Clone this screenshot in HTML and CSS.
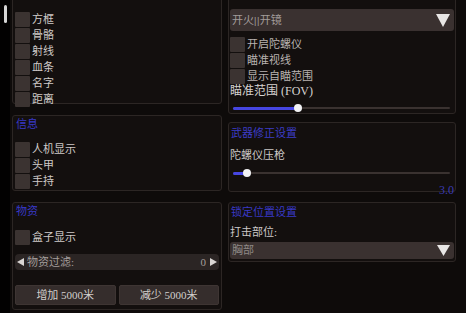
FILE: index.html
```html
<!DOCTYPE html>
<html lang="zh">
<head>
<meta charset="utf-8">
<link rel="stylesheet" href="styles.css">
</head>
<body>
<div class="app">
  <div class="rail"><div class="thumb"></div></div>
  <div class="main">
    <div class="col col-left">
      <section class="panel p-visual">
        <div class="hdr">透视</div>
        <div class="rows r-visual">
          <div class="chk"><span class="box"></span><span>方框</span></div>
          <div class="chk"><span class="box"></span><span>骨骼</span></div>
          <div class="chk"><span class="box"></span><span>射线</span></div>
          <div class="chk"><span class="box"></span><span>血条</span></div>
          <div class="chk"><span class="box"></span><span>名字</span></div>
          <div class="chk"><span class="box"></span><span>距离</span></div>
        </div>
      </section>
      <section class="panel p-info">
        <div class="hdr">信息</div>
        <div class="rows r-info">
          <div class="chk"><span class="box"></span><span>人机显示</span></div>
          <div class="chk"><span class="box"></span><span>头甲</span></div>
          <div class="chk"><span class="box"></span><span>手持</span></div>
        </div>
      </section>
      <section class="panel p-items">
        <div class="hdr">物资</div>
        <div class="rows r-items">
          <div class="chk"><span class="box"></span><span>盒子显示</span></div>
        </div>
        <div class="filter">
          <svg class="arr" width="7" height="8" viewBox="0 0 7 8"><path d="M7 0V8L0 4Z" fill="#d9d5d3"/></svg>
          <span class="f-label">物资过滤:</span>
          <span class="f-val">0</span>
          <svg class="arr" width="7" height="8" viewBox="0 0 7 8"><path d="M0 0V8L7 4Z" fill="#d9d5d3"/></svg>
        </div>
        <div class="btns">
          <div class="btn">增加 5000米</div>
          <div class="btn">减少 5000米</div>
        </div>
      </section>
    </div>
    <div class="col col-right">
      <section class="panel p-aim">
        <div class="combo c-big">
          <span>开火<span class="bars">||</span>开镜</span>
          <svg width="14" height="14" viewBox="0 0 14 14"><path d="M0 1H14L7 14Z" fill="#e8e6e5"/></svg>
        </div>
        <div class="rows r-aim">
          <div class="chk dim"><span class="box"></span><span>开启陀螺仪</span></div>
          <div class="chk dim"><span class="box"></span><span>瞄准视线</span></div>
          <div class="chk dim"><span class="box"></span><span>显示自瞄范围</span></div>
        </div>
        <div class="label l-fov">瞄准范围 (FOV)</div>
        <div class="slider s-fov">
          <div class="track"><div class="fill" style="width:65px"><span class="knob"></span></div></div>
        </div>
      </section>
      <section class="panel p-weapon">
        <div class="hdr">武器修正设置</div>
        <div class="label l-gyro">陀螺仪压枪</div>
        <div class="slider s-gyro">
          <div class="track"><div class="fill" style="width:14px"><span class="knob"></span></div></div>
        </div>
        <div class="val">3.0</div>
      </section>
      <section class="panel p-lock">
        <div class="hdr">锁定位置设置</div>
        <div class="label l-part">打击部位:</div>
        <div class="combo c-small">
          <span>胸部</span>
          <svg width="13" height="11" viewBox="0 0 13 11"><path d="M0 0H13L6.5 11Z" fill="#e8e6e5"/></svg>
        </div>
      </section>
    </div>
  </div>
</div>
</body>
</html>
```
FILE: styles.css
```css
* { box-sizing: border-box; margin: 0; padding: 0; }
html, body { width: 466px; height: 313px; overflow: hidden; background: #0e0b0a; }
body { font: 11px/13px "Liberation Serif", "Noto Sans CJK SC", serif; color: #cfcac8; }

.app { display: flex; height: 313px; }
.rail { width: 10px; flex: none; background: #020101; padding: 5px 0 0 4px; }
.thumb { width: 3px; height: 18px; background: #d4d4d4; border-radius: 2px; }

.main { flex: 1; display: flex; padding-left: 2px; gap: 6px; }
.col { display: flex; flex-direction: column; flex: none; }
.col-left { width: 210px; margin-top: -14px; }
.col-right { width: 228px; margin-top: -6px; }

.panel { border: 1px solid #2c2624; border-radius: 3px; background: #130f0e; padding: 2px 2px 0; flex: none; }
.hdr { color: #3838c6; height: 13px; padding-left: 1px; white-space: nowrap; }

.rows { display: flex; flex-direction: column; gap: 1px; }
.chk { display: flex; align-items: center; height: 15px; white-space: nowrap; }
.chk.dim { color: #b9b3b1; }
.box { width: 15px; height: 15px; flex: none; background: #3b3331; border-radius: 1px; margin-right: 2px; }

.p-visual { height: 118px; }
.r-visual { margin-top: 10px; }
.p-info { height: 76px; margin-top: 11px; }
.r-info { margin-top: 11px; }
.p-items { height: 108px; margin-top: 11px; }
.r-items { margin-top: 12px; }

.filter { margin-top: 9px; height: 16px; background: #2b2524; border-radius: 4px; display: flex; align-items: center; padding: 0 2px 0 2px; color: #a39d9b; }
.f-label { margin-left: 3px; flex: 1; }
.f-val { margin-right: 4px; }

.btns { margin-top: 15px; display: grid; grid-template-columns: 1fr 1fr; gap: 3px; }
.btn { height: 20px; background: #352d2c; border: 1px solid #3e3533; border-radius: 2px; color: #d3cfcd; display: flex; align-items: center; justify-content: center; }

.p-aim { height: 120px; padding: 14px 1px 0; }
.combo { background: #3a3130; border-radius: 3px; display: flex; align-items: center; justify-content: space-between; padding: 0 4px 0 2px; color: #a29c9a; }
.bars { font-weight: bold; letter-spacing: 0.5px; }
.c-big { height: 22px; }
.c-small { height: 17px; margin-top: 3px; color: #8f8987; }
.r-aim { margin-top: 6px; }
.label { color: #d6d2d0; height: 13px; white-space: nowrap; }
.l-fov { margin-top: 1px; font-size: 12px; }

.slider { height: 12px; display: flex; align-items: center; }
.s-fov { margin-top: 4px; }
.track { position: relative; flex: 1; height: 2px; margin: 0 4px 0 3px; background: #3a3230; border-radius: 1px; }
.fill { position: relative; height: 3px; margin-top: -0.5px; background: #4646e2; border-radius: 2px; }
.knob { position: absolute; right: -4px; top: -2.5px; width: 8px; height: 8px; border-radius: 50%; background: #f2f2f4; }

.p-weapon { height: 70px; margin-top: 8px; padding: 4px 1px 0; }
.p-weapon .hdr { color: #3c3cc6; }
.l-gyro { margin-top: 9px; color: #cdc9c7; }
.s-gyro { margin-top: 5px; }
.val { margin-top: 5px; text-align: right; color: #3a3ab4; font-size: 12px; height: 13px; }

.p-lock { height: 60px; margin-top: 10px; padding: 3px 1px 0; }
.l-part { margin-top: 7px; color: #cdc9c7; }
```
